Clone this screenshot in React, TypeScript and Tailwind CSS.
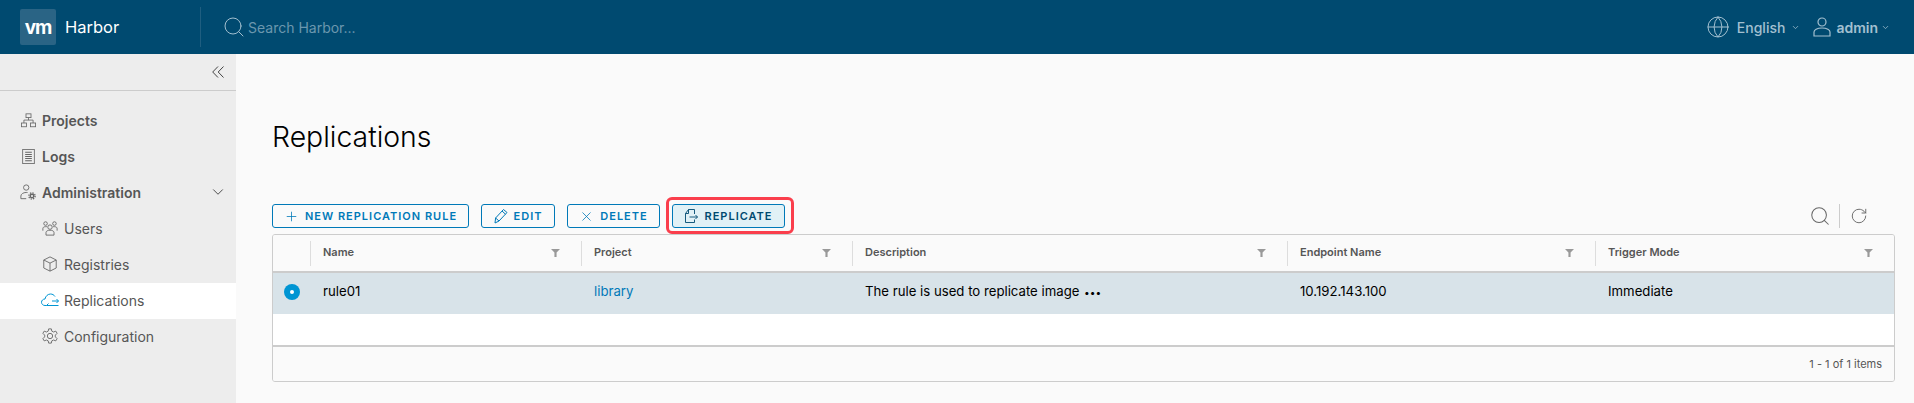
import { ChevronDown, Globe, Plus, RotateCw, Search, X } from 'lucide-react';
import type { ReactNode } from 'react';

const FONT = "font-['Inter','Noto_Sans',sans-serif]";

const Icon = ({ children, className }: { children: ReactNode; className?: string }) => (
  <svg viewBox="0 0 36 36" fill="none" stroke="currentColor" strokeWidth="2" className={className}>
    {children}
  </svg>
);

const ProjectsIcon = () => (
  <Icon className="h-[15px] w-[15px]">
    <rect x="12" y="2" width="12" height="9" />
    <rect x="1" y="24" width="12" height="9" />
    <rect x="23" y="24" width="12" height="9" />
    <path d="M18 11v6M7 24v-7h22v7" />
  </Icon>
);

const LogsIcon = () => (
  <Icon className="h-[15px] w-[15px]">
    <rect x="4" y="1" width="28" height="34" />
    <path d="M10 8h16M10 13h16M10 18h16M10 23h16M10 28h16" strokeWidth="2.5" />
  </Icon>
);

const AdminIcon = () => (
  <Icon className="h-4 w-4">
    <circle cx="14" cy="8" r="6" />
    <path d="M2 33v-6c0-4 5-8 12-8 1 0 2 0 3 .2M2 33h12" />
    <circle cx="27" cy="27" r="4" strokeWidth="3" />
    <circle cx="27" cy="27" r="7" strokeWidth="3" strokeDasharray="3 2.500" />
  </Icon>
);

const UsersIcon = () => (
  <Icon className="h-4 w-4">
    <circle cx="18" cy="16" r="5" />
    <circle cx="8" cy="8" r="4" />
    <circle cx="28" cy="8" r="4" />
    <path d="M9 34v-6c0-3 4-5 9-5s9 2 9 5v6zM2 24v-5c0-2 2-4 6-4h3M34 24v-5c0-2-2-4-6-4h-3" />
  </Icon>
);

const RegistriesIcon = () => (
  <Icon className="h-4 w-4">
    <path d="M18 2l14 7v18l-14 7-14-7V9z" />
    <path d="M4 9l14 7 14-7M18 16v18" />
  </Icon>
);

const ReplicationsIcon = () => (
  <Icon className="h-[18px] w-[18px] shrink-0">
    <path d="M11 29H8c-4 0-7-3-7-6.500S4 16 8 16c1-6 6-10 11-10 4 0 7 2 9 5" />
    <path d="M11 29h24M22 20h13M31 16l4 4-4 4M11 29l4-4" />
  </Icon>
);

const GearIcon = () => (
  <Icon className="h-4 w-4">
    <circle cx="18" cy="18" r="6" />
    <path d="M15 2h6l1 5 4 2 5-2 3 5-4 4v4l4 4-3 5-5-2-4 2-1 5h-6l-1-5-4-2-5 2-3-5 4-4v-4l-4-4 3-5 5 2 4-2z" />
  </Icon>
);

const CollapseIcon = () => (
  <svg viewBox="0 0 12 12" fill="none" stroke="currentColor" strokeWidth="1" className="h-3 w-3">
    <path d="M6 .5L.7 6 6 11.500M11.500 .5L6.200 6l5.300 5.500" />
  </svg>
);

const UserIcon = () => (
  <svg viewBox="0 0 18 20" fill="none" stroke="currentColor" strokeWidth="1.2" className="h-5 w-[18px]">
    <circle cx="9" cy="5" r="4" />
    <path d="M1 19v-4c0-2 3-4 8-4s8 2 8 4v4z" />
  </svg>
);

const PencilIcon = () => (
  <svg viewBox="0 0 14 16" fill="none" stroke="currentColor" strokeWidth="1" className="h-4 w-[14px]">
    <path d="M1 15l.6-5L9.500 1.500l3.500 3-8 8.500zM1.600 10L5 13M8 3l3.500 3.200" />
  </svg>
);

const ReplicateIcon = () => (
  <svg viewBox="0 0 13 14" fill="none" stroke="currentColor" strokeWidth="0.9" className="h-[14px] w-[13px]">
    <path d="M.5 4.500L3.500 .5H9.500V5M9.500 10.500V13.500H.5V4.500H3.500V.5M4.500 8H12.500M10.500 6L12.500 8L10.500 10" />
  </svg>
);

const FilterIcon = () => (
  <svg viewBox="0 0 10 10" className="h-[9px] w-[9px] fill-[#999]">
    <path d="M0 1h10L6.200 5v5H3.800V5z" />
  </svg>
);

const NAV = [
  { label: 'Projects', icon: <ProjectsIcon /> },
  { label: 'Logs', icon: <LogsIcon /> },
];

const SUB_NAV = [
  { label: 'Users', icon: <UsersIcon /> },
  { label: 'Registries', icon: <RegistriesIcon /> },
  { label: 'Replications', icon: <ReplicationsIcon />, active: true },
  { label: 'Configuration', icon: <GearIcon /> },
];

const COLUMNS = [
  { title: 'Name', value: 'rule01' },
  { title: 'Project', value: 'library', link: true },
  { title: 'Description', value: 'The rule is used to replicate image', more: true },
  { title: 'Endpoint Name', value: '10.192.143.100' },
  { title: 'Trigger Mode', value: 'Immediate' },
];

const GRID = 'grid grid-cols-[38px_271px_271px_435px_308px_1fr]';
const BUTTON =
  'flex h-6 items-center justify-center rounded-[3px] border border-[#0079b8] text-[11px] font-semibold tracking-[1px]';

const Header = () => (
  <header className="flex h-[54px] shrink-0 items-center bg-[#004a70]">
    <div className="flex w-[200px] items-center pl-5">
      <div className="flex h-9 w-9 items-center justify-center rounded-[2px] bg-[#2a6485]">
        <span className="text-[19px] leading-none font-bold tracking-[-1px] text-white">vm</span>
      </div>
      <span className="ml-[9px] text-[16.5px] text-white">Harbor</span>
    </div>
    <div className="h-10 w-px bg-[#1f5e80]" />
    <Search className="ml-[21px] h-6 w-6 text-[#a3c0d0]" strokeWidth={1} />
    <span className="ml-[2px] text-[14px] text-[#6b97ae]">Search Harbor...</span>
    <div className="ml-auto flex items-center text-[#a3c0d0]">
      <Globe className="h-6 w-6" strokeWidth={1} />
      <span className="ml-[7px] text-[14px] font-medium">English</span>
      <ChevronDown className="ml-[6px] h-[9px] w-[9px]" strokeWidth={2} />
      <div className="ml-[13px]">
        <UserIcon />
      </div>
      <span className="ml-[5px] text-[14px] font-semibold">admin</span>
      <ChevronDown className="mr-6 ml-[3px] h-[9px] w-[9px]" strokeWidth={2} />
    </div>
  </header>
);

const NavIcon = ({ children, active }: { children: ReactNode; active?: boolean }) => (
  <span className={`flex w-4 justify-center ${active ? 'text-[#0095d3]' : 'text-[#666]'}`}>{children}</span>
);

const Sidebar = () => (
  <aside className="w-[236px] shrink-0 bg-[#ededed] text-[14px] text-[#565656]">
    <div className="flex h-[37px] items-center justify-end border-b border-[#ccc] pr-3 text-[#444]">
      <CollapseIcon />
    </div>
    <nav className="pt-3">
      {NAV.map((item) => (
        <div key={item.label} className="flex h-9 items-center gap-[6px] pb-[2px] pl-5 font-semibold">
          <NavIcon>{item.icon}</NavIcon>
          {item.label}
        </div>
      ))}
      <div className="flex h-9 items-center gap-[6px] pb-[2px] pl-5 font-semibold">
        <NavIcon>
          <AdminIcon />
        </NavIcon>
        Administration
        <ChevronDown className="mr-[9px] ml-auto h-[18px] w-[18px] text-[#444]" strokeWidth={1.25} />
      </div>
      {SUB_NAV.map((item) => (
        <div
          key={item.label}
          className={`flex h-9 items-center gap-[6px] pb-[2px] pl-[42px] ${item.active ? 'bg-white' : ''}`}
        >
          <NavIcon active={item.active}>{item.icon}</NavIcon>
          {item.label}
        </div>
      ))}
    </nav>
  </aside>
);

const Toolbar = () => (
  <div className="flex h-[30px] items-start">
    <button className={`${BUTTON} w-[197px] gap-[6px] text-[#0079b8]`}>
      <Plus className="h-[15px] w-[15px]" strokeWidth={1.25} />
      NEW REPLICATION RULE
    </button>
    <button className={`${BUTTON} ml-3 w-[74px] gap-[6px] text-[#0079b8]`}>
      <PencilIcon />
      EDIT
    </button>
    <button className={`${BUTTON} ml-3 w-[93px] gap-[6px] text-[#0079b8]`}>
      <X className="h-[15px] w-[15px]" strokeWidth={1.25} />
      DELETE
    </button>
    <div className="relative ml-3">
      <button className={`${BUTTON} w-[113px] gap-[7px] bg-[#e1f1f6] text-[#004a70]`}>
        <ReplicateIcon />
        REPLICATE
      </button>
      <div className="absolute -top-[7px] -left-[6px] h-[37px] w-[128px] rounded-[6px] border-[3px] border-[#fa3e4c]" />
    </div>
    <div className="ml-auto flex items-center text-[#666]">
      <Search className="h-[22px] w-[22px]" strokeWidth={1.1} />
      <div className="mr-[10px] ml-[8px] h-6 w-px bg-[#ccc]" />
      <RotateCw className="mr-[27px] h-[18px] w-[18px]" strokeWidth={1.25} />
    </div>
  </div>
);

const Table = () => (
  <div className="overflow-hidden rounded-[3px] border border-[#ccc] text-[13.2px]">
    <div className={`${GRID} h-[38px] items-center border-b-2 border-[#ccc] bg-[#fafafa]`}>
      <div className="h-[25px] border-r border-[#ddd]" />
      {COLUMNS.map((col, index) => (
        <div
          key={col.title}
          className={`flex h-[25px] items-center justify-between pr-[21px] pb-[2px] pl-3 text-[11px] font-semibold text-[#565656] ${
            index < COLUMNS.length - 1 ? 'border-r border-[#ddd]' : ''
          }`}
        >
          {col.title}
          <FilterIcon />
        </div>
      ))}
    </div>
    <div className={`${GRID} h-[41px] items-center bg-[#d8e3e9] pb-1 text-black`}>
      <div className="flex justify-center pr-px">
        <div className="flex h-4 w-4 items-center justify-center rounded-full bg-[#0095d3]">
          <div className="h-1 w-1 rounded-full bg-white" />
        </div>
      </div>
      {COLUMNS.map((col) => (
        <div key={col.title} className={`pl-3 ${col.link ? 'text-[#0079b8]' : ''}`}>
          {col.value}
          {col.more && <span className="ml-[5px] text-[10px] font-bold tracking-[1px]">•••</span>}
        </div>
      ))}
    </div>
    <div className="h-[33px] border-b-2 border-[#ccc] bg-white" />
    <div className="flex h-[34px] items-center justify-end bg-[#fafafa] pr-3 text-[11px] text-[#565656]">
      1 - 1 of 1 items
    </div>
  </div>
);

export default function App() {
  return (
    <div className={`flex h-screen flex-col overflow-hidden ${FONT}`}>
      <Header />
      <div className="flex flex-1">
        <Sidebar />
        <main className="flex-1 bg-[#fafafa] pt-[65px] pr-[19px] pl-9">
          <h1 className="h-[85px] text-[28.4px] leading-9 font-light text-black">Replications</h1>
          <Toolbar />
          <Table />
        </main>
      </div>
    </div>
  );
}
